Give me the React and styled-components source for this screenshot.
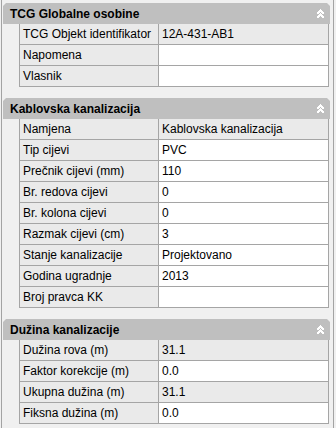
import React from 'react';
import styled, { createGlobalStyle } from 'styled-components';

const Global = createGlobalStyle`
  html, body { margin: 0; padding: 0; background: #f0f0f0; }
  body { font-family: "Liberation Sans", Arial, sans-serif; font-size: 12px; color: #000; }
`;

const Frame = styled.div`
  width: 336px;
  height: 428px;
  background: #f0f0f0;
  box-sizing: border-box;
  padding-left: 1px;
  overflow: hidden;
`;

const Inner = styled.div`
  width: 333px;
  height: 428px;
  box-sizing: border-box;
  border-left: 1px solid #a3a3a3;
  border-right: 1px solid #a3a3a3;
  padding: 3px 3px 0 1px;
  display: flex;
  flex-direction: column;
  gap: 11px;
`;

const Section = styled.section`
  display: flex;
  flex-direction: column;
`;

const Header = styled.div`
  height: 21px;
  background: #bfbfbf;
  clip-path: polygon(3px 0, calc(100% - 3px) 0, 100% 3px, 100% 100%, 0 100%, 0 3px);
  display: flex;
  align-items: center;
  justify-content: space-between;
  padding: 0 5px 0 7px;
  font-weight: bold;
  font-size: 12px;
`;

const Row = styled.div`
  display: flex;
  height: 21px;
  margin-right: 1px;
`;

const Indent = styled.div`
  width: 16px;
  flex: none;
`;

const Cell = styled.div`
  box-sizing: border-box;
  height: 21px;
  border-left: 1px solid #a5a5a5;
  border-bottom: 1px solid #a5a5a5;
  background: ${p => (p.$shaded ? '#eaeaea' : '#ffffff')};
  display: flex;
  align-items: center;
  padding-left: 3px;
  white-space: nowrap;
  overflow: hidden;
`;

const NameCell = styled(Cell)`
  width: 139px;
  flex: none;
`;

const ValueCell = styled(Cell)`
  flex: 1;
  border-right: 1px solid #a5a5a5;
`;

const Chevron = () => (
  <svg width="9" height="10" viewBox="0 0 9 10" shapeRendering="crispEdges">
    <polyline points="1,5 4.5,1.5 8,5" fill="none" stroke="#fff" strokeWidth="1.6" />
    <polyline points="1,9 4.5,5.5 8,9" fill="none" stroke="#fff" strokeWidth="1.6" />
  </svg>
);

const sections = [
  {
    title: 'TCG Globalne osobine',
    rows: [
      ['TCG Objekt identifikator', '12A-431-AB1', true],
      ['Napomena', ''],
      ['Vlasnik', ''],
    ],
  },
  {
    title: 'Kablovska kanalizacija',
    rows: [
      ['Namjena', 'Kablovska kanalizacija', true],
      ['Tip cijevi', 'PVC'],
      ['Prečnik cijevi (mm)', '110'],
      ['Br. redova cijevi', '0'],
      ['Br. kolona cijevi', '0'],
      ['Razmak cijevi (cm)', '3'],
      ['Stanje kanalizacije', 'Projektovano'],
      ['Godina ugradnje', '2013'],
      ['Broj pravca KK', ''],
    ],
  },
  {
    title: 'Dužina kanalizacije',
    rows: [
      ['Dužina rova (m)', '31.1', true],
      ['Faktor korekcije (m)', '0.0'],
      ['Ukupna dužina (m)', '31.1', true],
      ['Fiksna dužina (m)', '0.0'],
    ],
  },
];

export default function App() {
  return (
    <Frame>
      <Global />
      <Inner>
        {sections.map(s => (
          <Section key={s.title}>
            <Header>
              <span>{s.title}</span>
              <Chevron />
            </Header>
            {s.rows.map(([name, value, shaded]) => (
              <Row key={name}>
                <Indent />
                <NameCell $shaded>{name}</NameCell>
                <ValueCell $shaded={shaded}>{value}</ValueCell>
              </Row>
            ))}
          </Section>
        ))}
      </Inner>
    </Frame>
  );
}
